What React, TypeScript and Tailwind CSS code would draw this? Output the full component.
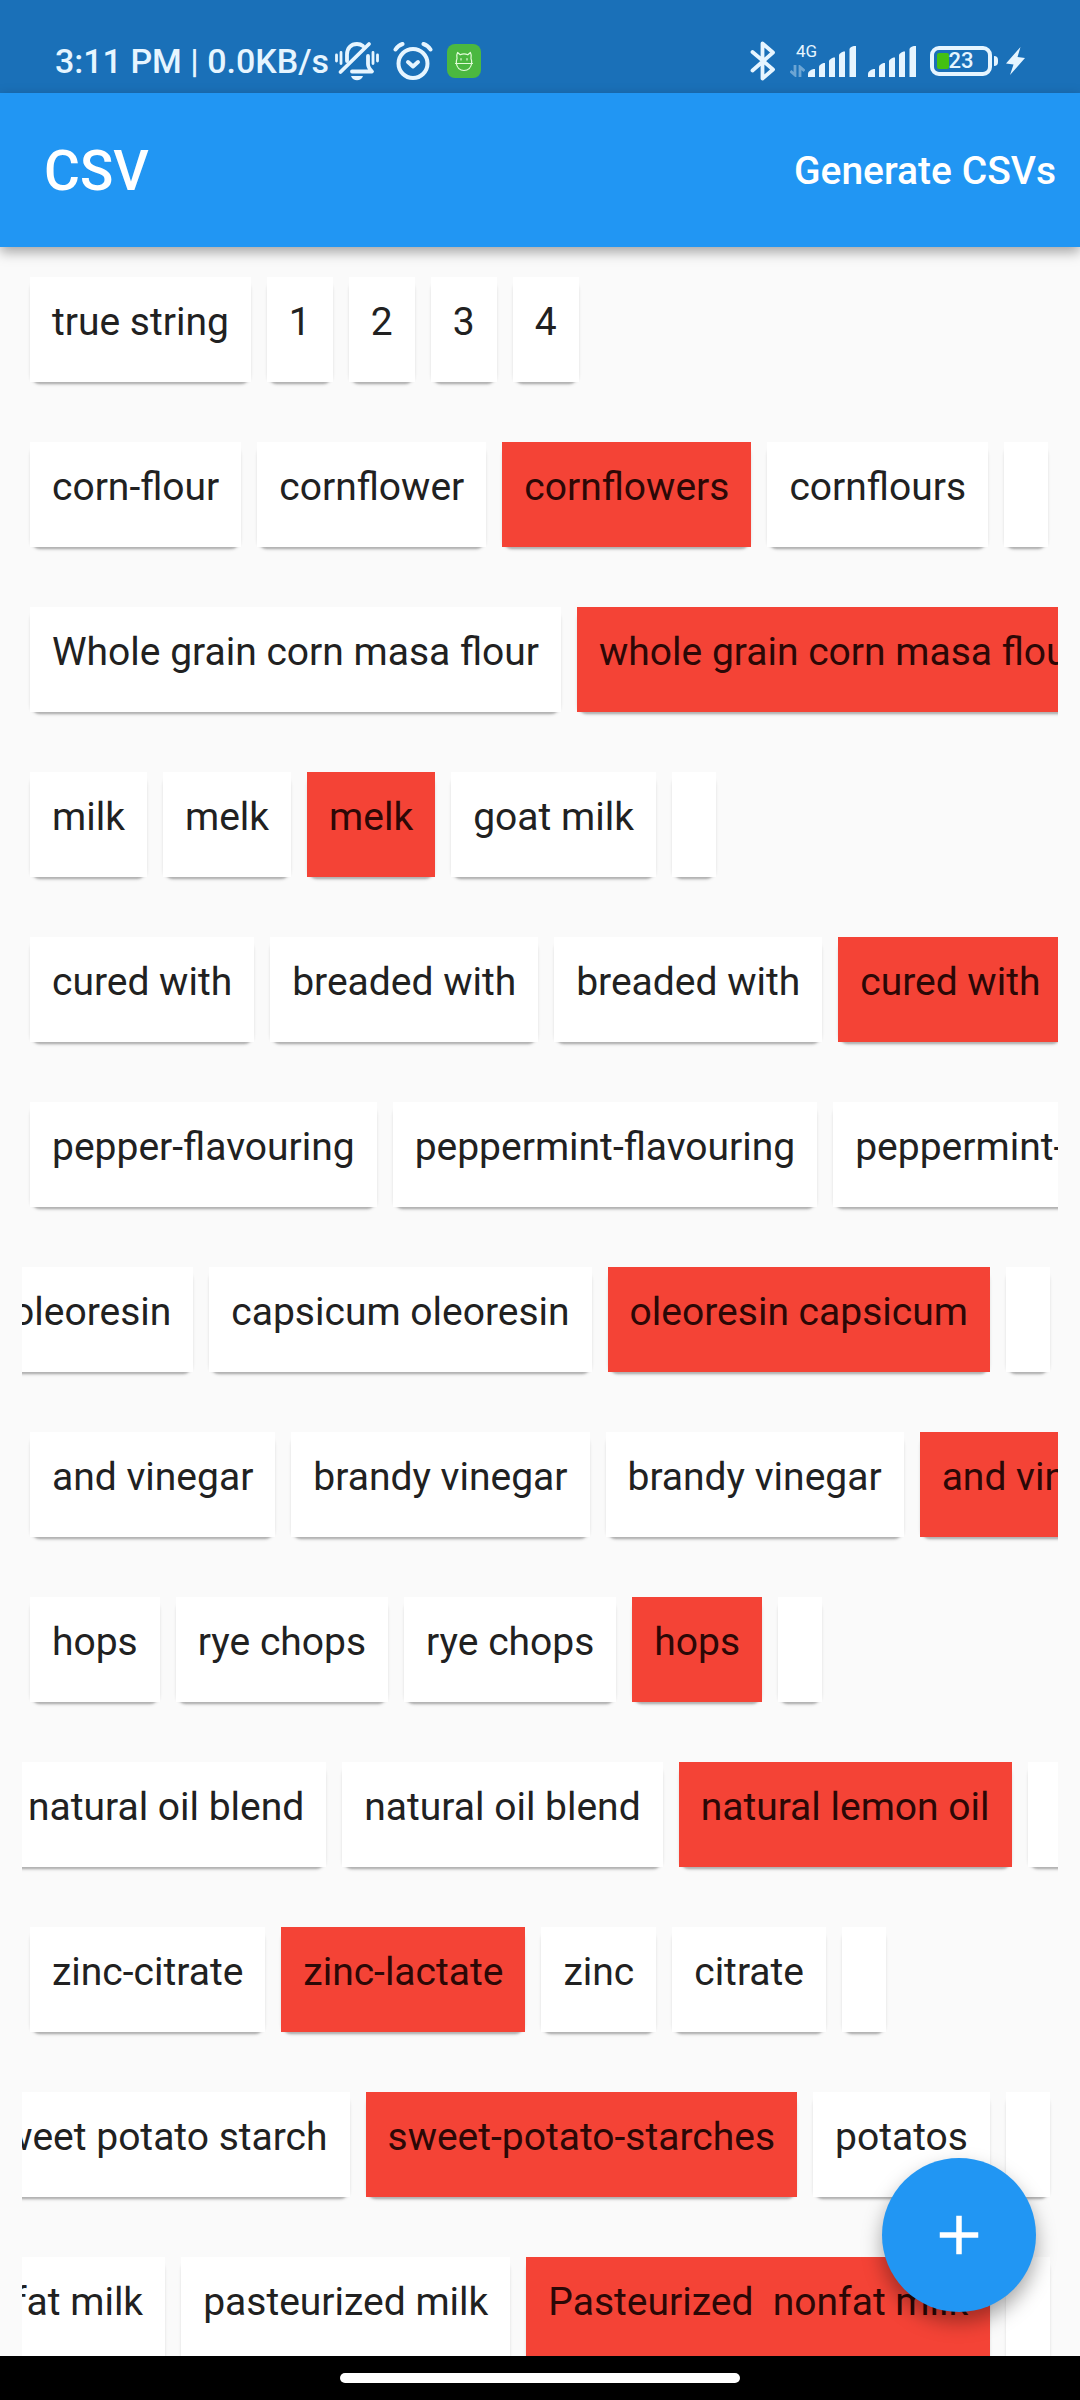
import { useLayoutEffect, useRef } from "react";

type Cell = { text: string; flagged?: boolean };
type RowData = { cells: Cell[]; scroll?: number | "end" };

const c = (text: string): Cell => ({ text });
const bad = (text: string): Cell => ({ text, flagged: true });

const ROWS: RowData[] = [
  { cells: [c("true string"), c("1"), c("2"), c("3"), c("4")] },
  { cells: [c("corn-flour"), c("cornflower"), bad("cornflowers"), c("cornflours"), c("")] },
  { cells: [c("Whole grain corn masa flour"), bad("whole grain corn masa flour")] },
  { cells: [c("milk"), c("melk"), bad("melk"), c("goat milk"), c("")] },
  { cells: [c("cured with"), c("breaded with"), c("breaded with"), bad("cured with"), c("")] },
  { cells: [c("pepper-flavouring"), c("peppermint-flavouring"), c("peppermint-flavouring")] },
  { cells: [c("oleoresin"), c("capsicum oleoresin"), bad("oleoresin capsicum"), c("")], scroll: "end" },
  { cells: [c("and vinegar"), c("brandy vinegar"), c("brandy vinegar"), bad("and vinegar")] },
  { cells: [c("hops"), c("rye chops"), c("rye chops"), bad("hops"), c("")] },
  { cells: [c("natural oil blend"), c("natural oil blend"), bad("natural lemon oil"), c("")], scroll: 24 },
  { cells: [c("zinc-citrate"), bad("zinc-lactate"), c("zinc"), c("citrate"), c("")] },
  { cells: [c("sweet potato starch"), bad("sweet-potato-starches"), c("potatos"), c("")], scroll: "end" },
  { cells: [c("fat milk"), c("pasteurized milk"), bad("Pasteurized  nonfat milk"), c("")], scroll: "end" },
];

function BellOffIcon() {
  return (
    <svg width="44" height="40" viewBox="0 0 44 40" fill="none" stroke="currentColor" strokeWidth="3.800" strokeLinecap="round" aria-hidden="true">
      <path d="M1.500 14v6M6 11.500v11M38 11.500v11M42.500 14v6" strokeWidth="2.800" />
      <path d="M12 20v-6.500C12 7 16 3 22 3c2.500 0 4.500.8 6 2" />
      <path d="M33 15v8c0 3 1.500 5 4 7.500H17" strokeLinejoin="round" />
      <path d="M5.500 31 34 3" />
      <path d="M16 35h12c-1 3-3.500 4.200-6 4.200s-5-1.200-6-4.200Z" fill="currentColor" stroke="none" />
    </svg>
  );
}

function AlarmIcon() {
  return (
    <svg width="40" height="40" viewBox="0 0 40 40" fill="none" stroke="currentColor" strokeWidth="4" strokeLinecap="round" strokeLinejoin="round" aria-hidden="true">
      <circle cx="20" cy="22.500" r="14.500" />
      <path d="m15 21 5 4.500 5-4.500" />
      <path d="M2.500 8.500Q5 4.500 9.500 3M37.500 8.500Q35 4.500 30.500 3" />
    </svg>
  );
}

function AppBadgeIcon() {
  return (
    <svg width="34" height="34" viewBox="0 0 34 34" fill="none" aria-hidden="true">
      <rect width="34" height="34" rx="8" fill="#4bb840" />
      <g stroke="#e2fbd8" strokeWidth="1.200" strokeLinejoin="round" strokeLinecap="round">
        <path d="M10 14.500c-.6-2-.5-4 .6-6l2.600 2.300c2-.9 5.600-.9 7.600 0l2.600-2.300c1.100 2 1.200 4 .6 6 .6 1.500.8 3.200.6 5-.5 4-3.400 7-7.600 7s-7.100-3-7.600-7c-.2-1.800 0-3.500.6-5Z" />
        <path d="M8.500 19.500h17M14 14.500v1.500M20 14.500v1.500" />
      </g>
    </svg>
  );
}

function BluetoothIcon() {
  return (
    <svg width="26" height="40" viewBox="0 0 26 40" fill="none" stroke="currentColor" strokeWidth="3.800" strokeLinecap="round" strokeLinejoin="round" aria-hidden="true">
      <path d="M2.500 11 23 28.500 12.500 37.500v-35L23 11.500 2.500 29.500" />
    </svg>
  );
}

function SignalIcon() {
  return (
    <svg width="48" height="31" viewBox="0 0 48 31" fill="currentColor" aria-hidden="true">
      <path d="M0 31v-3.500q.5-3 5.500-4.500h1.500v8Z" />
      <path d="M11 31V20.500q.5-2 4.500-3.500H17v14Z" />
      <path d="M21 31V15q.5-2 4.500-3.500H27V31Z" />
      <path d="M31 31V9q.5-2 4.500-3.500H37V31Z" />
      <path d="M41.500 31V3q.5-2 4.500-3H48v31Z" />
    </svg>
  );
}

function DataArrowsIcon() {
  return (
    <svg width="15" height="12" viewBox="0 0 15 12" fill="none" stroke="currentColor" strokeWidth="2.800" opacity="0.4" aria-hidden="true">
      <path d="M5 0v10L.5 6M10 12V2l4.500 4" />
    </svg>
  );
}

function Battery() {
  return (
    <div className="flex items-center gap-0.5">
      <div className="relative flex h-[30px] w-[62px] items-center justify-center rounded-[9px] border-4 border-current">
        <span className="absolute left-[3px] h-[16px] w-[12px] rounded-[2px] bg-[#43c012]" />
        <span className="relative text-[22px] leading-none font-medium">23</span>
      </div>
      <span className="h-[10px] w-1 rounded-r-sm bg-current" />
    </div>
  );
}

function BoltIcon() {
  return (
    <svg width="19" height="28" viewBox="0 0 19 28" fill="currentColor" aria-hidden="true">
      <path d="M14.500 0 0 16.500l7.500 1L4 28l15-17-7.500-1Z" />
    </svg>
  );
}

function StatusBar() {
  return (
    <div className="flex h-[93px] shrink-0 items-end justify-between bg-[#1a70b8] px-[55px] pb-3 text-[#e6f5ff]">
      <div className="flex h-10 items-center">
        <span className="text-[34px] leading-10 font-medium whitespace-nowrap">3:11 PM | 0.0KB/s</span>
        <div className="ml-[6px] flex items-center gap-[14px]">
          <BellOffIcon />
          <AlarmIcon />
          <AppBadgeIcon />
        </div>
      </div>
      <div className="flex h-10 items-center">
        <BluetoothIcon />
        <div className="relative ml-[32px] flex items-center">
          <span className="absolute -top-[5px] -left-3 text-[17px] leading-5">4G</span>
          <span className="absolute bottom-0 -left-[18px]">
            <DataArrowsIcon />
          </span>
          <SignalIcon />
        </div>
        <div className="ml-3">
          <SignalIcon />
        </div>
        <div className="ml-[14px]">
          <Battery />
        </div>
        <div className="ml-2">
          <BoltIcon />
        </div>
      </div>
    </div>
  );
}

function Card({ cell }: { cell: Cell }) {
  return (
    <li className="shrink-0 rounded-[10px] shadow-[0_3px_3px_rgba(0,0,0,0.12),0_4px_2px_-2px_rgba(0,0,0,0.2)]">
      <div
        className={`h-[105px] px-[22px] pt-[23px] text-[39px] leading-[45px] whitespace-pre ${
          cell.flagged ? "bg-[#f44336] text-[#2c0806]" : "bg-white text-[#212121]"
        }`}
      >
        {cell.text}
      </div>
    </li>
  );
}

function CsvRow({ row }: { row: RowData }) {
  const ref = useRef<HTMLUListElement>(null);
  useLayoutEffect(() => {
    const el = ref.current;
    if (!el || row.scroll === undefined) return;
    el.scrollLeft = row.scroll === "end" ? el.scrollWidth : row.scroll;
  }, [row.scroll]);

  return (
    <ul ref={ref} className="flex h-[165px] shrink-0 items-start gap-4 overflow-x-auto px-2 pt-2 [scrollbar-width:none]">
      {row.cells.map((cell, i) => (
        <Card key={i} cell={cell} />
      ))}
    </ul>
  );
}

export default function App() {
  return (
    <div className="flex h-screen flex-col overflow-hidden bg-[#fafafa] font-['Roboto',sans-serif]">
      <StatusBar />
      <header className="relative z-10 flex h-[154px] shrink-0 items-center justify-between bg-[#2196f3] pt-[3px] pr-6 pl-11 text-white shadow-[0_5px_12px_rgba(0,0,0,0.35)]">
        <h1 className="text-[55px] leading-none font-medium">CSV</h1>
        <button type="button" className="text-[39px] leading-none font-medium">
          Generate CSVs
        </button>
      </header>
      <div className="relative min-h-0 flex-1">
        <main className="flex h-full flex-col overflow-y-auto px-[22px] pt-[22px] [scrollbar-width:none]">
          {ROWS.map((row, i) => (
            <CsvRow key={i} row={row} />
          ))}
        </main>
        <button
          type="button"
          aria-label="Add row"
          className="absolute right-11 bottom-11 flex size-[154px] items-center justify-center rounded-full bg-[#2196f3] text-white shadow-[0_10px_20px_rgba(0,0,0,0.35)]"
        >
          <svg width="66" height="66" viewBox="0 0 24 24" fill="currentColor" aria-hidden="true">
            <path d="M19 13h-6v6h-2v-6H5v-2h6V5h2v6h6v2z" />
          </svg>
        </button>
      </div>
      <nav className="flex h-11 shrink-0 items-center justify-center bg-black" aria-label="System navigation">
        <div className="h-[10px] w-[37%] rounded-full bg-white" />
      </nav>
    </div>
  );
}
